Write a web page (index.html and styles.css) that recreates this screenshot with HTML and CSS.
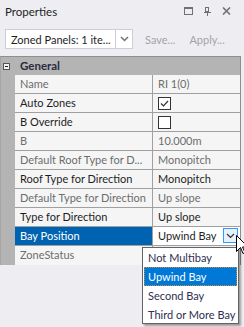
FILE: index.html
```html
<!DOCTYPE html>
<html>
<head>
<meta charset="utf-8">
<link rel="stylesheet" href="styles.css">
</head>
<body>
<div class="pane">
  <div class="titlebar">
    <span class="title">Properties</span>
    <div class="tools">
      <svg width="9" height="8" viewBox="0 0 9 8"><rect x="0.5" y="0.5" width="8" height="7" fill="none" stroke="#717171"/><rect x="0" y="0" width="9" height="2" fill="#717171"/></svg>
      <svg width="7" height="9" viewBox="0 0 7 9"><rect x="1.5" y="0.5" width="3" height="4" fill="none" stroke="#717171"/><rect x="4" y="1" width="1" height="4" fill="#717171"/><rect x="0" y="5" width="7" height="1" fill="#717171"/><rect x="3" y="6" width="1" height="3" fill="#717171"/></svg>
      <svg width="9" height="8" viewBox="0 0 9 8"><path d="M1 0.5l7 7M8 0.5l-7 7" stroke="#717171" stroke-width="1.6"/></svg>
    </div>
  </div>
  <div class="toolbar">
    <div class="combo">
      <span class="combo-text">Zoned Panels: 1 ite...</span>
      <span class="combo-btn"><svg width="9" height="6" viewBox="0 0 9 6"><path d="M1 1l3.5 3.5L8 1" fill="none" stroke="#717171" stroke-width="1.5"/></svg></span>
    </div>
    <span class="tb-link">Save...</span>
    <span class="tb-link">Apply...</span>
  </div>
  <div class="grid">
    <div class="row header">
      <div class="gutter"><span class="minus"></span></div>
      <div class="cat">General</div>
    </div>
    <div class="row ro"><div class="gutter"></div><div class="name">Name</div><div class="value">RI 1(0)</div></div>
    <div class="row"><div class="gutter"></div><div class="name">Auto Zones</div><div class="value"><span class="check"><svg width="11" height="11" viewBox="0 0 11 11"><path d="M2 5.5l2.5 2.5L9 3" fill="none" stroke="#333" stroke-width="1.2"/></svg></span></div></div>
    <div class="row"><div class="gutter"></div><div class="name">B Override</div><div class="value"><span class="check"></span></div></div>
    <div class="row ro"><div class="gutter"></div><div class="name">B</div><div class="value">10.000m</div></div>
    <div class="row ro"><div class="gutter"></div><div class="name">Default Roof Type for D...</div><div class="value">Monopitch</div></div>
    <div class="row"><div class="gutter"></div><div class="name">Roof Type for Direction</div><div class="value">Monopitch</div></div>
    <div class="row ro"><div class="gutter"></div><div class="name">Default Type for Direction</div><div class="value">Up slope</div></div>
    <div class="row"><div class="gutter"></div><div class="name">Type for Direction</div><div class="value">Up slope</div></div>
    <div class="row sel"><div class="gutter"></div><div class="name">Bay Position</div><div class="value">Upwind Bay<span class="dd-btn"><svg width="9" height="6" viewBox="0 0 9 6"><path d="M1 1l3.5 3.5L8 1" fill="none" stroke="#333" stroke-width="1.2"/></svg></span></div></div>
    <div class="row ro last"><div class="gutter"></div><div class="name">ZoneStatus</div><div class="value"></div></div>
  </div>
  <div class="popup">
    <div class="item">Not Multibay</div>
    <div class="item active">Upwind Bay</div>
    <div class="item">Second Bay</div>
    <div class="item">Third or More Bay</div>
  </div>
  <svg class="cursor" width="12" height="20" viewBox="0 0 12 20"><path d="M0.5 0.5v16l4-4 2.5 6 2-1-2.5-5.5h5.5z" fill="#fff" stroke="#000"/></svg>
</div>
</body>
</html>
```
FILE: styles.css
```css
html, body {
  margin: 0;
  padding: 0;
  background: #eeeef2;
  font-family: "Lato", "Noto Sans", sans-serif;
  font-size: 11px;
  color: #1e1e1e;
}
.pane {
  position: relative;
  width: 244px;
  height: 327px;
  overflow: hidden;
}
.titlebar {
  height: 24px;
  display: flex;
  align-items: center;
  padding-left: 5px;
  padding-right: 13px;
}
.title {
  font-size: 11.5px;
  flex: 1;
  margin-top: -2px;
}
.tools {
  display: flex;
  align-items: center;
  gap: 11px;
  margin-top: -2px;
}
.toolbar {
  display: flex;
  align-items: center;
  padding-left: 5px;
  margin-top: 5px;
  height: 20px;
}
.combo {
  width: 126px;
  height: 18px;
  border: 1px solid #cccedb;
  background: #fff;
  display: flex;
  align-items: center;
}
.combo-text {
  flex: 1;
  padding-left: 5px;
  white-space: nowrap;
}
.combo-btn {
  width: 16px;
  height: 18px;
  border-left: 1px solid #cccedb;
  display: flex;
  align-items: center;
  justify-content: center;
}
.tb-link {
  color: #a2a4a5;
  margin-left: 12px;
}
.tb-link + .tb-link {
  margin-left: 14px;
}
.grid {
  margin-top: 7px;
  border-top: 1px solid #8e8e8e;
  border-right: 1px solid #8e8e8e;
  border-left: 1px solid #a6a6a6;
  box-sizing: border-box;
  width: 241px;
}
.row {
  display: flex;
  height: 19px;
}
.gutter {
  width: 14px;
  background: #b4b4b4;
  flex: none;
  position: relative;
}
.header {
  background: #b4b4b4;
  height: 18px;
}
.minus {
  position: absolute;
  left: 2px;
  top: 6px;
  width: 5px;
  height: 5px;
  border: 1px solid #555;
  background: #f3f3f3;
}
.minus::after {
  content: "";
  position: absolute;
  left: 1px;
  top: 2px;
  width: 3px;
  height: 1px;
  background: #222;
}
.cat {
  font-weight: bold;
  font-size: 11.5px;
  color: #2b2b40;
  padding-left: 5px;
  line-height: 18px;
}
.name {
  width: 138px;
  flex: none;
  box-sizing: border-box;
  border-right: 1px solid #a0a0a0;
  border-bottom: 1px solid #a0a0a0;
  background: #f5f5f5;
  padding-left: 5px;
  line-height: 18px;
  white-space: nowrap;
  overflow: hidden;
}
.value {
  flex: 1;
  border-bottom: 1px solid #a0a0a0;
  background: #f5f5f5;
  padding-left: 5px;
  line-height: 18px;
  position: relative;
  white-space: nowrap;
}
.ro .name, .ro .value {
  color: #6d6d6d;
}
.check {
  display: inline-block;
  width: 11px;
  height: 11px;
  border: 1px solid #333;
  background: #fff;
  vertical-align: middle;
  margin-top: -2px;
  position: relative;
}
.check svg {
  position: absolute;
  left: 0;
  top: 0;
}
.sel .name {
  background: #0063b1;
  color: #fff;
}
.sel .value {
  background: #fff;
}
.dd-btn {
  position: absolute;
  right: 2px;
  top: 1px;
  width: 13px;
  height: 13px;
  border: 1px solid #3399ff;
  background: #e5f1fb;
  display: flex;
  align-items: center;
  justify-content: center;
}
.last .name, .last .value {
  border-bottom: none;
}
.last .value {
  background: #eeeef2;
}
.popup {
  position: absolute;
  left: 142px;
  top: 247px;
  width: 97px;
  height: 77px;
  box-sizing: border-box;
  border: 1px solid #646464;
  background: #fff;
  box-shadow: 2px 2px 2px rgba(0,0,0,0.35);
  padding: 0 1px;
}
.item {
  height: 19px;
  line-height: 19px;
  padding-left: 4px;
  color: #2e2e52;
  box-sizing: border-box;
  white-space: nowrap;
}
.item.active {
  background: #0078d7;
  color: #fff;
  border: 1px dotted #c88c28;
  line-height: 17px;
  padding-left: 3px;
}
.cursor {
  position: absolute;
  left: 236px;
  top: 235px;
}
```
